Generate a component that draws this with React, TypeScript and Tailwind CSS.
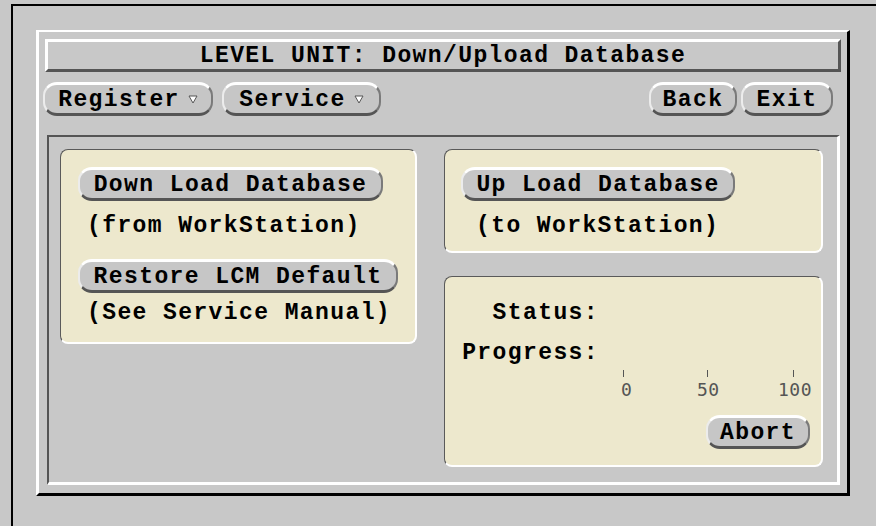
import type { ReactNode } from 'react';

// Motif-style pill button: light top/left bevel, dark bottom/right shadow
function PillButton({ children, className = '' }: { children: ReactNode; className?: string }) {
    return (
        <button
            className={`h-[34px] flex items-center justify-center pt-[3px] rounded-[14px] border-t-[3px] border-l-2 border-b-[3px] border-r-2 border-t-white border-l-[#ececec] border-b-[#555555] border-r-[#7a7a7a] bg-[#c6c6c6] text-[23px] font-bold tracking-[1.4px] leading-none text-black ${className}`}
        >
            {children}
        </button>
    );
}

function MenuArrow() {
    return (
        <svg width="10" height="9" viewBox="0 0 10 9" className="ml-[8px] -mt-[2px]">
            <polygon points="1,1 9,1 5,8" fill="#ffffff" stroke="#555555" strokeWidth="1" />
        </svg>
    );
}

const panel =
    'rounded-[8px] bg-[#ede8cd] border-t border-l border-b-2 border-r-2 border-t-[#5a5a5a] border-l-[#5a5a5a] border-b-white border-r-white';

export default function App() {
    return (
        <div className="w-[876px] h-[526px] overflow-hidden bg-[#c8c8c8] pt-[4px] pl-[11px] font-['Liberation_Mono',monospace] text-black">
            <div className="h-full border-t-2 border-l-2 border-t-black border-l-black pt-[24px] pl-[23px]">
                {/* raised window frame */}
                <div className="w-[814px] h-[466px] flex flex-col border-t-2 border-l-[3px] border-r-[3px] border-b-[3px] border-t-white border-l-white border-r-black border-b-black px-[6px] pt-[7px]">
                    {/* title bar */}
                    <div className="w-[796px] h-[33px] flex items-center justify-center pt-[2px] border-[3px] border-t-white border-l-white border-b-[#555555] border-r-[#555555] text-[23px] font-bold tracking-[1.4px] leading-none">
                        LEVEL UNIT: Down/Upload Database
                    </div>

                    {/* menu / navigation row */}
                    <div className="mt-[10px] -ml-[2px] w-[798px] flex justify-between">
                        <div className="flex gap-[9px]">
                            <PillButton className="w-[170px]">
                                Register<MenuArrow />
                            </PillButton>
                            <PillButton className="w-[159px]">
                                Service<MenuArrow />
                            </PillButton>
                        </div>
                        <div className="flex gap-[4px] mr-[8px]">
                            <PillButton className="w-[88px]">Back</PillButton>
                            <PillButton className="w-[92px]">Exit</PillButton>
                        </div>
                    </div>

                    {/* sunken work area */}
                    <div className="mt-[19px] ml-[2px] w-[793px] h-[350px] flex gap-[27px] border-t-2 border-l-2 border-b-[3px] border-r-[3px] border-t-[#555555] border-l-[#555555] border-b-white border-r-white pl-[11px] pt-[12px] text-[23px] font-bold tracking-[1.4px] leading-[22px]">
                        <div className={`${panel} w-[357px] h-[195px] flex flex-col items-start pt-[17px] pl-[17px]`}>
                            <PillButton className="w-[305px]">Down Load Database</PillButton>
                            <div className="mt-[14px] pl-[9px]">(from WorkStation)</div>
                            <PillButton className="mt-[22px] w-[320px]">Restore LCM Default</PillButton>
                            <div className="mt-[9px] pl-[9px]">(See Service Manual)</div>
                        </div>

                        <div className="w-[379px] flex flex-col gap-[23px]">
                            <div className={`${panel} h-[104px] flex flex-col items-start pt-[17px] pl-[16px]`}>
                                <PillButton className="w-[274px]">Up Load Database</PillButton>
                                <div className="mt-[14px] pl-[15px]">(to WorkStation)</div>
                            </div>

                            <div className={`${panel} h-[191px] flex flex-col pt-[25px]`}>
                                <div className="w-[154px] text-right">Status:</div>
                                <div className="mt-[18px] w-[154px] text-right">Progress:</div>

                                {/* progress scale */}
                                <div className="mt-[6px] flex h-[7px]">
                                    <div className="ml-[178px] w-px h-full bg-[#555555]" />
                                    <div className="ml-[83px] w-px h-full bg-[#555555]" />
                                    <div className="ml-[85px] w-px h-full bg-[#555555]" />
                                </div>
                                <div className="mt-[4px] flex pl-[176px] font-['DejaVu_Sans_Mono',monospace] font-normal text-[18px] leading-[18px] tracking-[0.5px] text-[#555555]">
                                    <span className="w-[76px]">0</span>
                                    <span className="w-[81px]">50</span>
                                    <span>100</span>
                                </div>

                                <PillButton className="mt-[16px] mr-[11px] self-end w-[104px]">Abort</PillButton>
                            </div>
                        </div>
                    </div>
                </div>
            </div>
        </div>
    );
}
